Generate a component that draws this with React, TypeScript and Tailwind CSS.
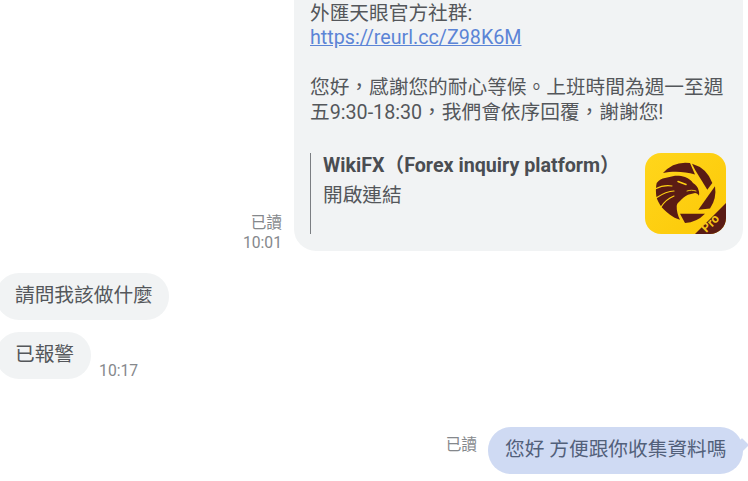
import React from "react";

const fontStack = { fontFamily: 'Roboto, "Noto Sans CJK TC", sans-serif' };

const WikiLogo = () => (
  <svg viewBox="0 0 81 81" className="w-[81px] h-[81px] shrink-0 rounded-[16px]">
    <defs>
      <linearGradient id="yel" x1="0" y1="0" x2="1" y2="1">
        <stop offset="0" stopColor="#ffd61c" />
        <stop offset="1" stopColor="#fcc806" />
      </linearGradient>
    </defs>
    <rect width="81" height="81" fill="url(#yel)" />
    <g fill="#5a1b14">
      {/* shutter blades */}
      <path d="M18 20 A30.5 30.5 0 0 1 45 10 L50 21.5 C39 18 27 18 18 20 Z" />
      <path d="M47 10.7 A30.5 30.5 0 0 1 67.3 30 L62.3 36.7 L50 16.7 Z" />
      <path d="M70 33.3 A30.5 30.5 0 0 1 65 55.5 L53.3 56.7 Z" />
      <path d="M35 60.7 L60 60.7 A30.5 30.5 0 0 1 40 70 Z" />
      {/* eagle */}
      <path d="M11.7 30 C14 27 17 25.5 20 25 L30 22.7 C34 22.5 37 23 40 24 C44 25.5 46.5 27.5 48 30 C51 32 53 34 53.5 37 C54.3 39 54.3 41 54 42.7 C53 41 51.5 40 50 40 L43 41.7 C40 43 37 45.5 35 48 C33 49.5 32 51 31.7 53 C31.5 58 33 63 35 66.7 C31 65.5 28 64 25 61.7 C20 58 17 55 15 51.7 C12.5 48 11 44 11 40 C10.8 36.5 11 33 11.7 30 Z" />
    </g>
    <g fill="none" stroke="#fdcf12" strokeWidth="1.2" strokeLinecap="round">
      <path d="M10 36 C16 33 22 32 27 33" />
      <path d="M11 45 C17 41 23 38 29 38" />
      <path d="M16 54 C19 49 24 45 29 43" />
      <path d="M33 28.5 L41 31.5" strokeWidth="1.5" />
      <path d="M42 38 C45 37 48 37 51 38" strokeWidth="0.9" />
    </g>
    <path d="M81 50 L81 81 L50 81 Z" fill="#5a1b14" />
    <text
      x="65"
      y="74.5"
      fontSize="12.5"
      fontWeight="700"
      fill="#f6c516"
      textAnchor="middle"
      transform="rotate(-45 65 70)"
      style={fontStack}
    >
      Pro
    </text>
  </svg>
);

const App = () => {
  return (
    <div
      className="w-[748px] h-[481px] overflow-hidden bg-white flex flex-col text-[19.7px] leading-[25px] text-[#54575b]"
      style={fontStack}
    >
      {/* outgoing card */}
      <div className="flex justify-end items-end gap-[12px] pr-[5px]">
        <div className="flex flex-col items-end text-[15.7px] leading-[20px] text-[#85888c] mb-[-2px]">
          <span>已讀</span>
          <span>10:01</span>
        </div>
        <div className="w-[449px] h-[251px] bg-[#f1f3f4] rounded-b-[22px] pl-[16px] pr-[17px] flex flex-col">
          <p className="whitespace-nowrap mt-[1px]">外匯天眼官方社群:</p>
          <a className="text-[#5b84d6] underline whitespace-nowrap mt-[-1px]">https://reurl.cc/Z98K6M</a>
          <p className="mt-[25px] whitespace-pre-line">
            {"您好，感謝您的耐心等候。上班時間為週一至週\n五9:30-18:30，我們會依序回覆，謝謝您!"}
          </p>
          <div className="mt-[28px] flex justify-between">
            <div className="border-l-[1.5px] border-[#7b7e82] pl-[12px] h-[81px] flex flex-col">
              <p className="font-bold text-[#4a4d52] whitespace-nowrap leading-[26px]">
                WikiFX（Forex inquiry platform）
              </p>
              <p className="mt-[4px] leading-[26px]">開啟連結</p>
            </div>
            <WikiLogo />
          </div>
        </div>
      </div>

      {/* incoming */}
      <div className="mt-[22px] flex flex-col gap-[12px] items-start ml-[-4px]">
        <div className="h-[47px] pl-[19px] pr-[16px] pb-[2px] flex items-center rounded-[23px] bg-[#f1f3f4]">請問我該做什麼</div>
        <div className="flex items-end gap-[8px]">
          <div className="h-[47px] pl-[19px] pr-[17px] pb-[2px] flex items-center rounded-[23px] bg-[#f1f3f4]">已報警</div>
          <span className="text-[15.7px] leading-[18px] text-[#85888c] mb-[-1px]">10:17</span>
        </div>
      </div>

      {/* outgoing last */}
      <div className="mt-[48px] flex justify-end items-center gap-[11px] pr-[5px]">
        <span className="text-[15.7px] text-[#85888c] mt-[-12px]">已讀</span>
        <div className="relative h-[47px] w-[255px] pl-[17px] pb-[2px] flex items-center rounded-[23px] bg-[#cfdaf3] text-[#52607a] whitespace-nowrap">
          您好 方便跟你收集資料嗎
          <div className="absolute right-[-4px] top-[13px] w-[10px] h-[10px] rotate-45 bg-[#cfdaf3] rounded-[1px]" />
        </div>
      </div>
    </div>
  );
};

export default App;
